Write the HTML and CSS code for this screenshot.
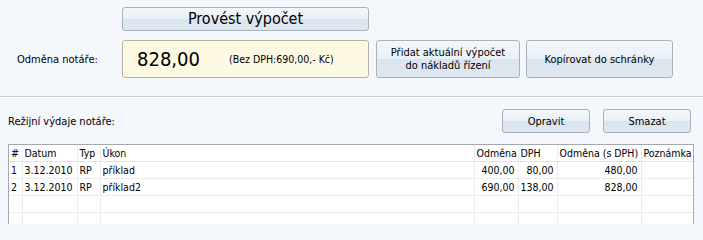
FILE: index.html
```html
<!DOCTYPE html>
<html>
<head>
<meta charset="utf-8">
<link rel="stylesheet" href="styles.css">
</head>
<body>
<div class="page">
  <div class="top">
    <div class="row1">
      <button class="btn btn-big">Provést výpočet</button>
    </div>
    <div class="row2">
      <div class="label">Odměna notáře:</div>
      <div class="result">
        <span class="amount">828,00</span>
        <span class="net">(Bez DPH:690,00,- Kč)</span>
      </div>
      <button class="btn btn-add">Přidat aktuální výpočet<br>do nákladů řízení</button>
      <button class="btn btn-copy">Kopírovat do schránky</button>
    </div>
  </div>
  <div class="sep"></div>
  <div class="row3">
    <div class="label2">Režijní výdaje notáře:</div>
    <button class="btn btn-small">Opravit</button>
    <button class="btn btn-small btn-del">Smazat</button>
  </div>
  <div class="grid">
    <table>
      <colgroup>
        <col class="c-n"><col class="c-d"><col class="c-t"><col class="c-u"><col class="c-o"><col class="c-dph"><col class="c-os"><col class="c-p">
      </colgroup>
      <thead>
        <tr><th>#</th><th>Datum</th><th>Typ</th><th>Úkon</th><th>Odměna</th><th>DPH</th><th>Odměna (s DPH)</th><th>Poznámka</th></tr>
      </thead>
      <tbody>
        <tr><td>1</td><td>3.12.2010</td><td>RP</td><td>příklad</td><td class="num">400,00</td><td class="num">80,00</td><td class="num">480,00</td><td></td></tr>
        <tr><td>2</td><td>3.12.2010</td><td>RP</td><td>příklad2</td><td class="num">690,00</td><td class="num">138,00</td><td class="num">828,00</td><td></td></tr>
        <tr><td></td><td></td><td></td><td></td><td></td><td></td><td></td><td></td></tr>
        <tr><td></td><td></td><td></td><td></td><td></td><td></td><td></td><td></td></tr>
      </tbody>
    </table>
  </div>
</div>
</body>
</html>
```
FILE: styles.css
```css
html, body {
  margin: 0;
  padding: 0;
}
body {
  width: 703px;
  height: 224px;
  overflow: hidden;
  background: #f4f7fb;
  font-family: "DejaVu Sans Condensed", "Liberation Sans", sans-serif;
  font-stretch: condensed;
  font-size: 11px;
  color: #000;
}
.page {
  display: flex;
  flex-direction: column;
}
.top {
  padding: 7px 0 0 0;
}
.row1 {
  display: flex;
  padding-left: 122px;
}
.btn {
  box-sizing: border-box;
  font-family: inherit;
  font-stretch: condensed;
  font-size: 11px;
  color: #000;
  border: 1px solid #a9b2bb;
  border-radius: 3px;
  background: linear-gradient(to bottom, #f3f7fb 0%, #e9f0f7 50%, #dae5ef 51%, #dfe8f1 100%);
  padding: 0;
  margin: 0;
  line-height: 13px;
}
.btn-big {
  width: 247px;
  height: 24px;
  font-size: 16px;
  line-height: 20px;
}
.row2 {
  display: flex;
  align-items: stretch;
  margin-top: 9px;
  height: 38px;
}
.label {
  width: 122px;
  box-sizing: border-box;
  padding-left: 17px;
  display: flex;
  align-items: center;
}
.result {
  box-sizing: border-box;
  width: 247px;
  border: 1px solid #b4b2a6;
  border-radius: 3px;
  background: #fef9e2;
  display: flex;
  align-items: center;
  padding-left: 14px;
}
.amount {
  font-size: 20px;
  width: 92px;
}
.net {
  font-size: 10.5px;
}
.btn-add {
  width: 144px;
  margin-left: 7px;
}
.btn-copy {
  width: 147px;
  margin-left: 6px;
}
.sep {
  margin-top: 18px;
  height: 0;
  border-top: 1px solid #c9ced3;
  border-bottom: 1px solid #ffffff;
}
.row3 {
  display: flex;
  align-items: center;
  margin-top: 11px;
  height: 24px;
}
.label2 {
  padding-left: 8px;
  width: 502px;
  box-sizing: border-box;
}
.btn-small {
  width: 88px;
  height: 24px;
}
.btn-del {
  margin-left: 13px;
}
.grid {
  margin-top: 11px;
  margin-left: 8px;
  width: 686px;
  box-sizing: border-box;
  height: 90px;
  border: 1px solid #a3a8ad;
  border-bottom: none;
  background: #ffffff;
  overflow: hidden;
}
table {
  border-collapse: collapse;
  table-layout: fixed;
  width: 684px;
  font-size: 10.5px;
}
.c-n { width: 13px; }
.c-d { width: 55px; }
.c-t { width: 23px; }
.c-u { width: 374px; }
.c-o { width: 44px; }
.c-dph { width: 39px; }
.c-os { width: 84px; }
.c-p { width: 52px; }
th, td {
  height: 16px;
  padding: 0 1px 0 2px;
  border-right: 1px solid #ececec;
  border-bottom: 1px solid #ececec;
  text-align: left;
  font-weight: normal;
  white-space: nowrap;
  overflow: hidden;
  line-height: 16px;
}
th:last-child, td:last-child {
  border-right: none;
}
th {
  border-bottom-color: #e2e2e2;
}
td.num {
  text-align: right;
  padding-right: 3px;
}
```
